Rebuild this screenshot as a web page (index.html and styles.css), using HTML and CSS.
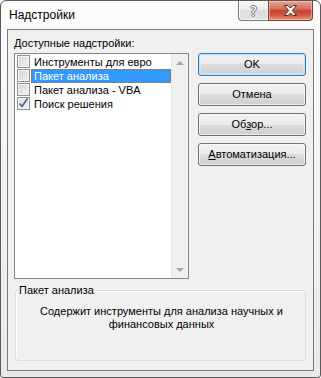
FILE: index.html
```html
<!DOCTYPE html>
<html lang="ru">
<head>
    <meta charset="UTF-8">
    <title>Надстройки</title>
    <link rel="stylesheet" href="styles.css">
</head>
<body>

<div class="window">
    <div class="titlebar">
        <span class="title">Надстройки</span>
        <div class="caption">
            <div class="cap-btn help"><span>?</span></div>
            <div class="cap-btn close">
                <svg width="15" height="11" viewBox="0 0 15 11">
                    <path d="M1.5 0.5h3.5l2.5 2.6 2.5-2.6h3.5l-4.2 5 4.2 5h-3.5l-2.5-2.6-2.5 2.6h-3.5l4.2-5z" fill="#fff" stroke="#4a2a24" stroke-width="1"/>
                </svg>
            </div>
        </div>
    </div>

    <div class="client">
        <div class="main">
            <div class="left">
                <div class="label"><u>Д</u>оступные надстройки:</div>
                <div class="listbox">
                    <ul class="items">
                        <li><span class="check"></span><span class="text">Инструменты для евро</span></li>
                        <li class="selected"><span class="check"></span><span class="text">Пакет анализа</span></li>
                        <li><span class="check"></span><span class="text">Пакет анализа - VBA</span></li>
                        <li><span class="check checked">
                            <svg width="11" height="11" viewBox="0 0 11 11"><path d="M1.5 5.5l2.5 3 5.5-8" fill="none" stroke="#4c5f8e" stroke-width="1.6"/></svg>
                        </span><span class="text">Поиск решения</span></li>
                    </ul>
                    <div class="scrollbar">
                        <div class="arrow-box"><span class="arrow up"></span></div>
                        <div class="arrow-box"><span class="arrow down"></span></div>
                    </div>
                </div>
            </div>
            <div class="buttons">
                <div class="btn default">OK</div>
                <div class="btn">Отмена</div>
                <div class="btn">Об<u>з</u>ор...</div>
                <div class="btn"><u>А</u>втоматизация...</div>
            </div>
        </div>

        <fieldset class="group">
            <legend>Пакет анализа</legend>
            <p>Содержит инструменты для анализа научных и<br>финансовых данных</p>
        </fieldset>
    </div>
</div>

</body>
</html>
```

FILE: styles.css
```css
*{
    margin: 0;
    padding: 0;
    box-sizing: border-box;
}
body{
    background: #ffffff;
    font-family: "Liberation Sans", Arial, sans-serif;
    font-size: 11px;
    color: #000;
}
.window{
    width: 321px;
    height: 378px;
    border: 1px solid #5a5a5a;
    border-radius: 6px 6px 3px 3px;
    background: linear-gradient(#fcfcfc, #f3f4f5 40%, #e9e9e9);
    display: flex;
    flex-direction: column;
    padding: 0 6px 6px 6px;
}
.titlebar{
    height: 28px;
    display: flex;
    justify-content: space-between;
    align-items: flex-start;
    padding-left: 2px;
}
.title{
    font-size: 12px;
    line-height: 16px;
    margin-top: 6px;
    color: #000;
}
.caption{
    display: flex;
    margin-right: 1px;
}
.cap-btn{
    height: 20px;
    display: flex;
    align-items: center;
    justify-content: center;
    border: 1px solid #7b7b7b;
    border-top: none;
}
.help{
    width: 30px;
    border-right: none;
    border-radius: 0 0 0 4px;
    background: linear-gradient(#fafafa, #ececec 45%, #dcdcdc 50%, #e4e4e4);
    box-shadow: inset 0 0 0 1px rgba(255,255,255,.7);
}
.help span{
    font-family: "DejaVu Sans", sans-serif;
    font-size: 14px;
    color: #fff;
    text-shadow: 1px 0 0 #707070, -1px 0 0 #707070, 0 1px 0 #707070, 0 -1px 0 #707070;
    line-height: 14px;
}
.close{
    width: 45px;
    border-color: #7a3b30;
    border-radius: 0 0 4px 0;
    background: linear-gradient(#e8a496, #d47160 40%, #c4432c 52%, #cf5a40 75%, #e39a82);
    box-shadow: inset 0 0 0 1px rgba(255,210,200,.5);
}
.client{
    flex: 1;
    border: 1px solid #7b7b7b;
    background: #f0f0f0;
    padding: 7px 7px 9px 6px;
    display: flex;
    flex-direction: column;
}
.main{
    display: flex;
    gap: 9px;
}
.label{
    line-height: 13px;
    margin-bottom: 3px;
}
.listbox{
    width: 175px;
    height: 226px;
    border: 1px solid #828790;
    background: #fff;
    display: flex;
}
.items{
    flex: 1;
    list-style: none;
    padding: 1px 0 0 2px;
}
.items li{
    height: 14px;
    display: flex;
    align-items: flex-start;
}
.check{
    width: 13px;
    height: 13px;
    border: 1px solid #8f8f8f;
    background: linear-gradient(135deg, #d3d3d3, #f3f3f3);
    box-shadow: inset 0 0 0 1px #f6f6f6;
    margin-right: 1px;
    display: flex;
    align-items: center;
    justify-content: center;
}
.check.checked{
    background: linear-gradient(135deg, #dadde3, #f6f6f6);
}
.items .text{
    flex: 1;
    height: 14px;
    line-height: 13px;
    padding: 0 2px;
    border: 1px solid transparent;
    white-space: nowrap;
}
.items .selected .text{
    background: #3399ff;
    color: #fff;
    border: 1px dotted #cc6600;
}
.scrollbar{
    width: 17px;
    background: #f0f0f0;
    border-left: 1px solid #e6e6e6;
    display: flex;
    flex-direction: column;
    justify-content: space-between;
}
.arrow-box{
    height: 17px;
    display: flex;
    align-items: center;
    justify-content: center;
}
.arrow{
    width: 0;
    height: 0;
    border-left: 4px solid transparent;
    border-right: 4px solid transparent;
}
.arrow.up{
    border-bottom: 4px solid #a9a9a9;
}
.arrow.down{
    border-top: 4px solid #a9a9a9;
}
.buttons{
    display: flex;
    flex-direction: column;
    gap: 7px;
    padding-top: 16px;
}
.btn{
    width: 108px;
    height: 23px;
    border: 1px solid #707070;
    border-radius: 3px;
    background: linear-gradient(#f2f2f2, #ebebeb 50%, #dddddd 50%, #cfcfcf);
    box-shadow: inset 0 0 0 1px rgba(255,255,255,.65);
    text-align: center;
    line-height: 21px;
}
.btn.default{
    border-color: #3c7fb1;
    box-shadow: inset 0 0 0 1px #b6e3fb, inset 0 0 0 2px rgba(210,240,255,.6);
}
.group{
    margin: 5px 0 0 1px;
    width: 291px;
    height: 77px;
    border: 1px solid #d5dfe5;
    border-radius: 3px;
    padding: 8px 0 0 2px;
    box-shadow: inset 1px 1px 0 #fff;
}
.group legend{
    padding: 0 1px;
    line-height: 13px;
}
.group p{
    text-align: center;
    line-height: 13px;
}
```
